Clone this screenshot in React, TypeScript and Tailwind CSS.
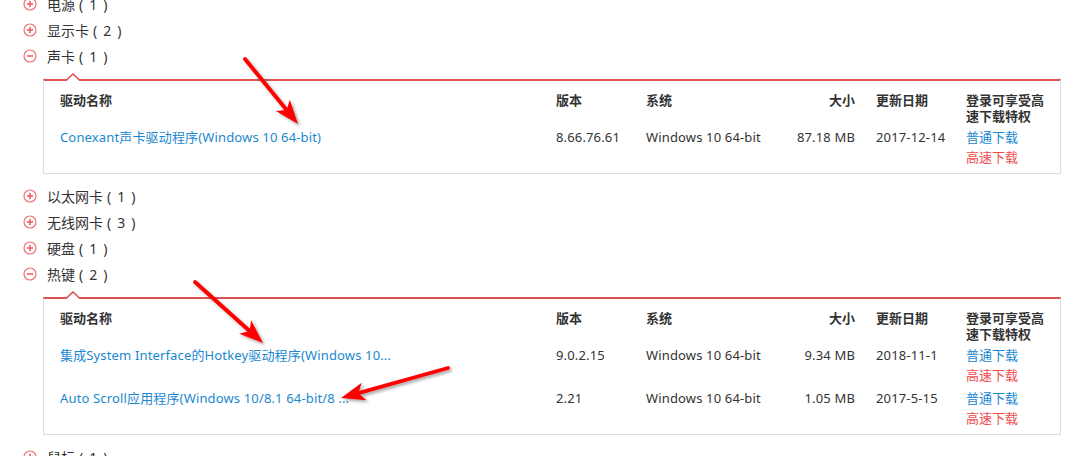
import React from "react";

type Driver = {
  name: string;
  version: string;
  system: string;
  size: string;
  date: string;
};

type Category = {
  title: string;
  count: number;
  open?: boolean;
  drivers?: Driver[];
};

const categories: Category[] = [
  { title: "电源", count: 1 },
  { title: "显示卡", count: 2 },
  {
    title: "声卡",
    count: 1,
    open: true,
    drivers: [
      {
        name: "Conexant声卡驱动程序(Windows 10 64-bit)",
        version: "8.66.76.61",
        system: "Windows 10 64-bit",
        size: "87.18 MB",
        date: "2017-12-14",
      },
    ],
  },
  { title: "以太网卡", count: 1 },
  { title: "无线网卡", count: 3 },
  { title: "硬盘", count: 1 },
  {
    title: "热键",
    count: 2,
    open: true,
    drivers: [
      {
        name: "集成System Interface的Hotkey驱动程序(Windows 10...",
        version: "9.0.2.15",
        system: "Windows 10 64-bit",
        size: "9.34 MB",
        date: "2018-11-1",
      },
      {
        name: "Auto Scroll应用程序(Windows 10/8.1 64-bit/8 ...",
        version: "2.21",
        system: "Windows 10 64-bit",
        size: "1.05 MB",
        date: "2017-5-15",
      },
    ],
  },
  { title: "鼠标", count: 1 },
];

const cols = "grid grid-cols-[496px_90px_130px_79px_111px_80px]";

const ToggleIcon = ({ open }: { open?: boolean }) => (
  <svg width="14" height="14" viewBox="0 0 14 14" className="shrink-0">
    <circle cx="7" cy="7" r="6" fill="none" stroke="#ec7276" strokeWidth="1.2" />
    <line x1="3.8" y1="7" x2="10.2" y2="7" stroke="#e85a60" strokeWidth="1.5" />
    {!open && <line x1="7" y1="3.8" x2="7" y2="10.2" stroke="#e85a60" strokeWidth="1.5" />}
  </svg>
);

const DriverPanel = ({ drivers }: { drivers: Driver[] }) => (
  <div className="relative mt-[10px] ml-[43px] w-[1018px] border-t-2 border-t-[#e05252] border-x border-b border-x-[#dddddd] border-b-[#dddddd] pt-[11px] pb-[6px] pl-[16px]">
    {/* notch */}
    <svg width="14" height="8" viewBox="0 0 14 8" className="absolute left-[22px] top-[-8px]">
      <polygon points="0,8 7,1 14,8" fill="#ffffff" />
      <polyline points="0,7.5 7,1 14,7.5" fill="none" stroke="#e05252" strokeWidth="1.6" />
    </svg>
    <div className={`${cols} text-[13px] font-bold text-[#333] leading-[16px]`}>
      <div>驱动名称</div>
      <div>版本</div>
      <div>系统</div>
      <div className="text-right">大小</div>
      <div className="pl-[21px]">更新日期</div>
      <div>登录可享受高速下载特权</div>
    </div>
    <div className="mt-[3px] flex flex-col gap-[3px]">
      {drivers.map((d) => (
        <div key={d.name} className={`${cols} text-[13px] leading-[20px] text-[#333] tracking-[0.15px]`}>
          <div className="text-[#1a88cf] truncate pr-4">{d.name}</div>
          <div>{d.version}</div>
          <div>{d.system}</div>
          <div className="text-right">{d.size}</div>
          <div className="pl-[21px]">{d.date}</div>
          <div className="flex flex-col tracking-normal">
            <span className="text-[#1a88cf]">普通下载</span>
            <span className="text-[#f04c4c]">高速下载</span>
          </div>
        </div>
      ))}
    </div>
  </div>
);

const Arrow = ({ x1, y1, x2, y2 }: { x1: number; y1: number; x2: number; y2: number }) => {
  const dx = x2 - x1;
  const dy = y2 - y1;
  const len = Math.hypot(dx, dy);
  const ux = dx / len;
  const uy = dy / len;
  const hl = 24;
  const hw = 9;
  const bx = x2 - ux * hl;
  const by = y2 - uy * hl;
  const nx = -uy;
  const ny = ux;
  const mx = x2 - ux * (hl - 6);
  const my = y2 - uy * (hl - 6);
  return (
    <g filter="url(#shadow)">
      <line x1={x1} y1={y1} x2={mx} y2={my} stroke="#ff0000" strokeWidth="3.8" strokeLinecap="round" />
      <polygon
        points={`${x2},${y2} ${bx + nx * hw},${by + ny * hw} ${mx},${my} ${bx - nx * hw},${by - ny * hw}`}
        fill="#ff0000"
      />
    </g>
  );
};

export default function App() {
  return (
    <div
      className="relative w-[1083px] h-[456px] overflow-hidden bg-white"
      style={{ fontFamily: '"Noto Sans", "Noto Sans CJK SC", sans-serif' }}
    >
      <div className="-mt-[9px]">
        {categories.map((c) => (
          <div key={c.title}>
            <div className="flex items-center h-[26px] pl-[23px] gap-[10px] text-[14px] text-[#333]">
              <ToggleIcon open={c.open} />
              <span>
                {c.title}
                <span className="ml-[4px]">(</span>
                <span className="mx-[6px]">{c.count}</span>
                <span>)</span>
              </span>
            </div>
            {c.open && c.drivers && <DriverPanel drivers={c.drivers} />}
            {c.open && <div className="h-[9px]" />}
          </div>
        ))}
      </div>
      <svg width="1083" height="456" className="absolute left-0 top-0 pointer-events-none">
        <defs>
          <filter id="shadow" x="-20%" y="-20%" width="140%" height="140%">
            <feDropShadow dx="2" dy="2" stdDeviation="1.5" floodColor="#000" floodOpacity="0.35" />
          </filter>
        </defs>
        <Arrow x1={245} y1={59} x2={298} y2={124} />
        <Arrow x1={195} y1={282} x2={263} y2={343} />
        <Arrow x1={448} y1={368} x2={341} y2={398} />
      </svg>
    </div>
  );
}
